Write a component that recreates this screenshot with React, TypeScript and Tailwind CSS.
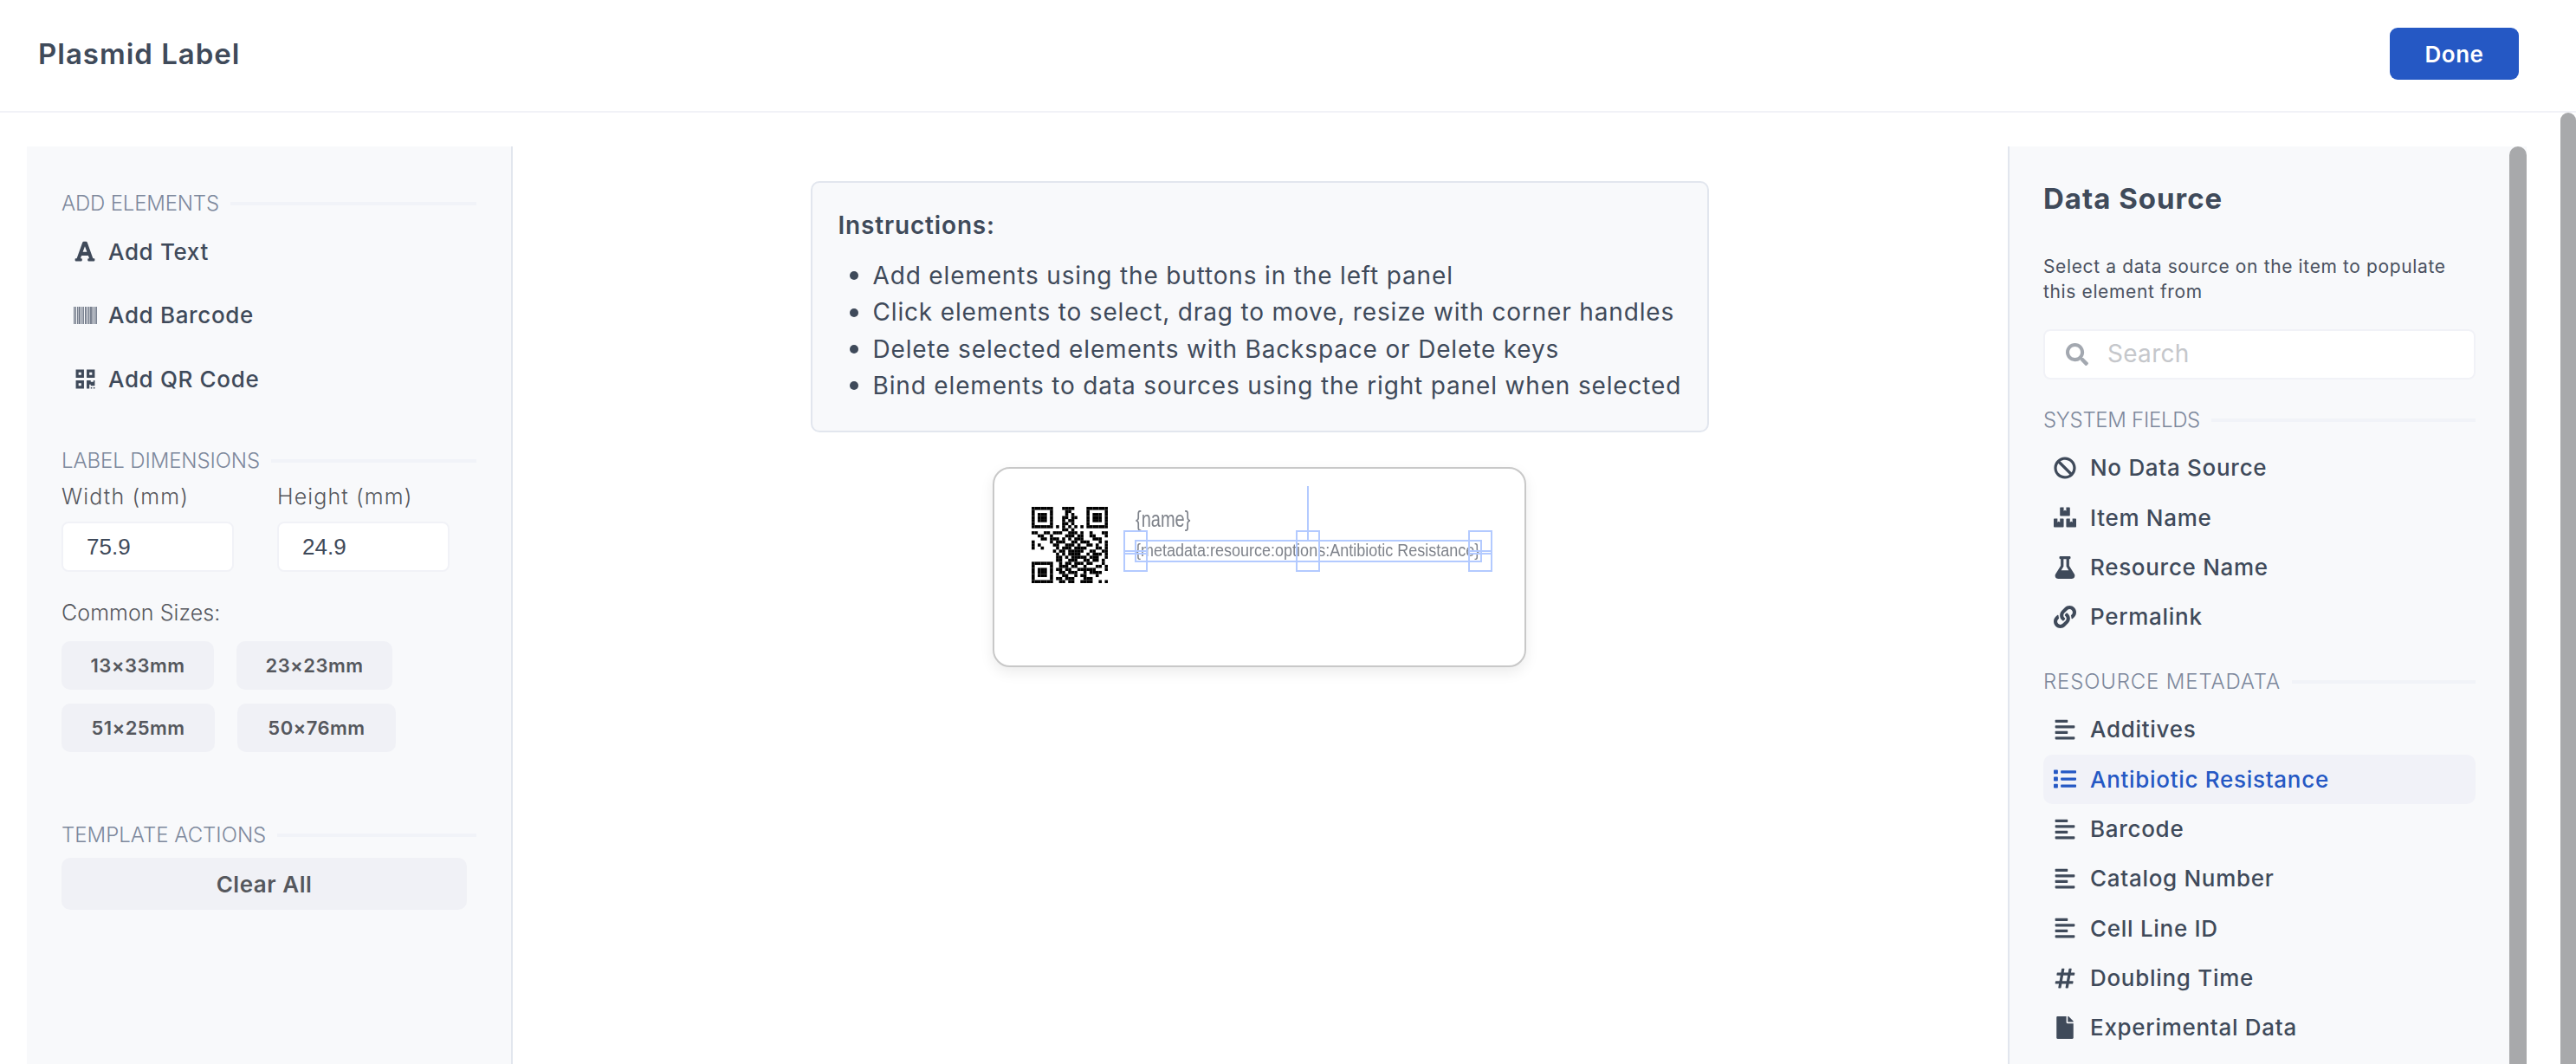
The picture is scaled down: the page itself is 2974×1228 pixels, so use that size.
import React from "react";
import { FaFont, FaQrcode, FaBan, FaBoxes, FaFlask, FaLink, FaAlignLeft, FaList, FaHashtag, FaFile, FaSearch } from "react-icons/fa";

const QR = [
  "1111111000111100001111111",
  "1000001000011000001000001",
  "1011101000010100001011101",
  "1011101000110110001011101",
  "1011101000101100001011101",
  "1000001000110100001000001",
  "1111111010101010101111111",
  "0000000000110100000000000",
  "1100110111001110100100011",
  "0011001000011101100110001",
  "0001101110101011100011100",
  "1000001011100110111000101",
  "1010000110011101001101001",
  "1001000010111011110001101",
  "0000000101101111100110011",
  "0000000010101111001011101",
  "0000000011010111110111001",
  "0000000011001110011011010",
  "1111111001011011101100010",
  "1000001001110110010001101",
  "1011101011011001111110001",
  "1011101001101110010111100",
  "1011101000110010110001000",
  "1000001011011100011100000",
  "1111111001101100111100101",
];

function QrCode() {
  return (
    <svg viewBox="0 0 25 25" className="absolute left-[43px] top-[44px] w-[88px] h-[88px]">
      {QR.flatMap((row, y) =>
        row.split("").map((c, x) => (c === "1" ? <rect key={x + "-" + y} x={x} y={y} width={1.02} height={1.02} fill="#000" /> : null))
      )}
    </svg>
  );
}

function BarcodeIcon() {
  const bars = [0, 2, 4, 5.5, 7, 9, 10.5, 13, 14, 16, 17.5, 19, 20, 22, 24];
  return (
    <svg width="27" height="20" viewBox="0 0 27 20" className="shrink-0">
      {bars.map((x, i) => (
        <rect key={i} x={x} y="0" width={i % 3 === 0 ? 1.5 : 1} height="20" fill="#7a8290" />
      ))}
      <rect x="25.4" y="0" width="1.6" height="20" fill="#7a8290" />
    </svg>
  );
}

function Section({ children, track }: { children: React.ReactNode; track: string }) {
  return (
    <div className="flex items-center gap-[13px] h-[30px]">
      <span className={`text-[24px] font-light text-[#7d889c] whitespace-nowrap ${track}`}>{children}</span>
      <div className="flex-1 h-[4px] bg-[#f1f3f8]" />
    </div>
  );
}

function AddRow({ icon, label }: { icon: React.ReactNode; label: string }) {
  return (
    <div className="flex items-center h-[73.5px] text-[26px] font-medium text-[#3f4a5a] tracking-[0.025em]">
      <div className="w-[54px] flex items-center justify-center text-[#3f4a5a]">{icon}</div>
      <span>{label}</span>
    </div>
  );
}

function Chip({ w, label }: { w: string; label: string }) {
  return (
    <div className={`${w} h-[56px] rounded-[10px] bg-[#f0f1f6] text-[#55575d] text-[22px] font-semibold tracking-[0.02em] flex items-center justify-center`}>
      {label}
    </div>
  );
}

function SourceRow({ icon, label, active }: { icon: React.ReactNode; label: string; active?: boolean }) {
  return (
    <div className={`flex items-center h-[57.33px] pl-[12px] rounded-[10px] text-[26px] font-medium tracking-[0.027em] ${active ? "bg-[#f1f2f8] text-[#2558c4]" : "text-[#3f4a5a]"}`}>
      <div className="w-[26px] flex items-center justify-center mr-[16px]">{icon}</div>
      <span>{label}</span>
    </div>
  );
}

function LeftPanel() {
  return (
    <aside className="w-[561px] shrink-0 bg-[#f8f9fb] border-r-2 border-[#e2e6ee] pl-[40px] pr-[40px] pt-[51px]">
      <Section track="tracking-[-0.0075em]">ADD ELEMENTS</Section>
      <div className="mt-[3.5px]">
        <AddRow icon={<FaFont size={26} />} label="Add Text" />
        <AddRow icon={<BarcodeIcon />} label="Add Barcode" />
        <AddRow icon={<FaQrcode size={25} />} label="Add QR Code" />
      </div>
      <div className="mt-[43px]"><Section track="tracking-[-0.004em]">LABEL DIMENSIONS</Section></div>
      <div className="flex gap-[50px] mt-[12px] text-[25px] font-light text-[#55575d] h-[30px] items-center tracking-[0.045em]">
        <span className="w-[199px]">Width (mm)</span>
        <span>Height (mm)</span>
      </div>
      <div className="flex gap-[50px] mt-[13px]">
        <div className="w-[199px] h-[58px] bg-white border-2 border-[#f1f2f7] rounded-[8px] pl-[27px] flex items-center text-[26px] text-[#3f4a5a] font-['Liberation_Sans',Arial,sans-serif]">75.9</div>
        <div className="w-[199px] h-[58px] bg-white border-2 border-[#f1f2f7] rounded-[8px] pl-[27px] flex items-center text-[26px] text-[#3f4a5a] font-['Liberation_Sans',Arial,sans-serif]">24.9</div>
      </div>
      <div className="mt-[33px] h-[30px] flex items-center text-[25px] font-light text-[#55575d] tracking-[0.003em]">Common Sizes:</div>
      <div className="flex gap-[26px] mt-[17px]">
        <Chip w="w-[176px]" label="13×33mm" />
        <Chip w="w-[180px]" label="23×23mm" />
      </div>
      <div className="flex gap-[26px] mt-[16px]">
        <Chip w="w-[177px]" label="51×25mm" />
        <Chip w="w-[183px]" label="50×76mm" />
      </div>
      <div className="mt-[81px]"><Section track="tracking-normal">TEMPLATE ACTIONS</Section></div>
      <div className="mt-[11px] w-[468px] h-[60px] rounded-[10px] bg-[#f0f1f6] text-[#55575d] text-[26px] font-semibold tracking-[0.02em] flex items-center justify-center">Clear All</div>
    </aside>
  );
}

function LabelCanvas() {
  const lineColor = "border-[#b3caff]";
  return (
    <div className="relative mt-[40px] w-[616px] h-[231px] bg-white border-2 border-[#c8c8c8] rounded-[20px] shadow-[0_6px_16px_rgba(0,0,0,0.08)]">
      <div className="absolute inset-0 blur-[0.7px]">
        <QrCode />
        <span className="absolute left-[163px] top-[45px] text-[20px] leading-[26px] text-[#7f838b] scale-y-[1.25] font-['Liberation_Sans',Arial,sans-serif]">{"{name}"}</span>
        <span className="absolute left-[163px] top-[82px] text-[18px] leading-[24px] text-[#7f838b] scale-y-[1.15] whitespace-nowrap font-['Liberation_Sans',Arial,sans-serif]">{"{metadata:resource:options:Antibiotic Resistance}"}</span>
        <div className={`absolute left-[162px] top-[82px] w-[401px] h-[26px] border-2 ${lineColor}`} />
        <div className="absolute left-[361px] top-[20px] w-[2px] h-[62px] bg-[#b3caff]" />
        {["left-[149px]", "left-[348px]", "left-[547px]"].map((l, i) => (
          <div key={l} className={`absolute ${l} top-[71px] w-[28px] h-[48px] border-2 ${lineColor}`}>
            {i !== 1 && <div className="absolute inset-x-0 top-[21px] h-[5px] border-y-2 border-[#b3caff]" />}
          </div>
        ))}
      </div>
    </div>
  );
}

function RightPanel() {
  const c = "text-[#3f4a5a]";
  return (
    <aside className="w-[599px] shrink-0 flex bg-[#f8f9fb] border-l-2 border-[#e2e6ee] overflow-hidden">
      <div className="w-[538px] shrink-0 pl-[39px] pt-[41px]">
        <div className="h-[40px] flex items-center text-[33px] font-bold text-[#3f4a5a] tracking-[0.03em]">Data Source</div>
        <p className="mt-[42.5px] text-[21px] leading-[29px] text-[#4a5160] tracking-[0.03em]">Select a data source on the item to populate<br />this element from</p>
        <div className="mt-[29.5px] h-[58px] bg-white border-2 border-[#f1f2f7] rounded-[8px] flex items-center pl-[24px]">
          <FaSearch size={26} className="text-[#a3a8b0]" />
          <span className="ml-[22px] text-[28px] leading-[28px] mb-[2px] text-[#c5c7cb] tracking-[0.01em]">Search</span>
        </div>
        <div className="mt-[32px]"><Section track="tracking-[-0.0125em]">SYSTEM FIELDS</Section></div>
        <div className="mt-[11.3px]">
          <SourceRow icon={<FaBan size={26} className={c} />} label="No Data Source" />
          <SourceRow icon={<FaBoxes size={32} className={c} />} label="Item Name" />
          <SourceRow icon={<FaFlask size={26} className={c} />} label="Resource Name" />
          <SourceRow icon={<FaLink size={26} className={c} />} label="Permalink" />
        </div>
        <div className="mt-[31.4px]"><Section track="tracking-[0.035em]">RESOURCE METADATA</Section></div>
        <div className="mt-[11.3px]">
          <SourceRow icon={<FaAlignLeft size={26} className={c} />} label="Additives" />
          <SourceRow active icon={<FaList size={26} className="text-[#2558c4]" />} label="Antibiotic Resistance" />
          <SourceRow icon={<FaAlignLeft size={26} className={c} />} label="Barcode" />
          <SourceRow icon={<FaAlignLeft size={26} className={c} />} label="Catalog Number" />
          <SourceRow icon={<FaAlignLeft size={26} className={c} />} label="Cell Line ID" />
          <SourceRow icon={<FaHashtag size={26} className={c} />} label="Doubling Time" />
          <SourceRow icon={<FaFile size={26} className={c} />} label="Experimental Data" />
        </div>
      </div>
      <div className="flex-1" />
      <div className="w-[20px] shrink-0 bg-[#a8a9ab] rounded-t-[10px]" />
    </aside>
  );
}

const STEPS = [
  "Add elements using the buttons in the left panel",
  "Click elements to select, drag to move, resize with corner handles",
  "Delete selected elements with Backspace or Delete keys",
  "Bind elements to data sources using the right panel when selected",
];

export default function App() {
  return (
    <div className="w-[2974px] h-[1228px] overflow-hidden flex flex-col bg-white font-['Inter',sans-serif]">
      <header className="h-[130px] shrink-0 border-b-2 border-[#f1f2f7] flex items-center justify-between pl-[44px] pr-[66px]">
        <h1 className="text-[33px] font-semibold text-[#3f4a5a] tracking-[0.03em] mb-[2px]">Plasmid Label</h1>
        <button className="w-[149px] h-[60px] mb-[4px] rounded-[9px] bg-[#2558c4] text-white text-[26px] font-semibold tracking-[0.02em]">Done</button>
      </header>
      <div className="flex-1 min-h-0 flex">
        <main className="flex-1 min-w-0 flex pl-[31px] pt-[39px] pr-[39px]">
          <LeftPanel />
          <div className="flex-1 min-w-0 flex flex-col items-center pr-[2px]">
            <section className="mt-[40px] w-[1037px] h-[290px] bg-[#f8f9fb] border-2 border-[#e2e6ee] rounded-[10px] pl-[30px] pt-[31px] text-[#3f4a5a]">
              <h2 className="h-[36px] flex items-center text-[28px] font-semibold tracking-[0.03em]">Instructions:</h2>
              <ul className="mt-[19px] text-[28px] leading-[42.4px] tracking-[0.03em]">
                {STEPS.map((s) => (
                  <li key={s} className="flex items-center whitespace-nowrap">
                    <span className="ml-[13px] mr-[17px] w-[10px] h-[10px] rounded-full bg-[#3f4a5a] shrink-0" />
                    {s}
                  </li>
                ))}
              </ul>
            </section>
            <LabelCanvas />
          </div>
          <RightPanel />
        </main>
        <div className="w-[18px] shrink-0 bg-[#a8a9ab] rounded-t-[9px]" />
      </div>
    </div>
  );
}
